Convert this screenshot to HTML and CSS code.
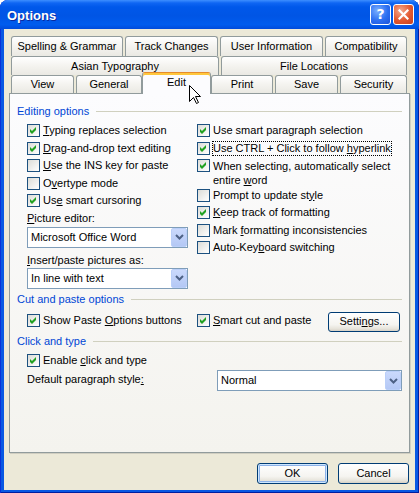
FILE: index.html
```html
<!DOCTYPE html>
<html lang="en">
<head>
<meta charset="utf-8">
<title>Options</title>
<link rel="stylesheet" href="styles.css">
</head>
<body>
<div class="window">
  <div class="titlebar">
    <span class="title">Options</span>
    <div class="caption-btns">
      <span class="cbtn help">?</span>
      <span class="cbtn close"><svg width="11" height="11" viewBox="0 0 11 11"><path d="M1.5 1.5 L9.5 9.5 M9.5 1.5 L1.5 9.5" stroke="#fff" stroke-width="2.2" stroke-linecap="square"/></svg></span>
    </div>
  </div>
  <div class="client">
    <div class="tabs">
      <div class="tab-row r1">
        <div class="tab t-sg">Spelling &amp; Grammar</div>
        <div class="tab t-tc">Track Changes</div>
        <div class="tab t-ui">User Information</div>
        <div class="tab t-co">Compatibility</div>
      </div>
      <div class="tab-row r2">
        <div class="tab t-at">Asian Typography</div>
        <div class="tab t-fl">File Locations</div>
      </div>
      <div class="tab-row r3">
        <div class="tab t-vi">View</div>
        <div class="tab t-ge">General</div>
        <div class="tab t-ed sel">Edit</div>
        <div class="tab t-pr">Print</div>
        <div class="tab t-sa">Save</div>
        <div class="tab t-se">Security</div>
      </div>
    </div>
    <div class="panel">
      <div class="legend">Editing options</div>
      <div class="cols">
        <div class="col">
          <div class="item"><span class="cb"><svg width="11" height="11" viewBox="0 0 11 11"><polygon points="2,4 4,6 8,2 8,5 4,9 2,7" fill="#21A121"/></svg></span><span class="lbl"><u>T</u>yping replaces selection</span></div>
          <div class="item"><span class="cb"><svg width="11" height="11" viewBox="0 0 11 11"><polygon points="2,4 4,6 8,2 8,5 4,9 2,7" fill="#21A121"/></svg></span><span class="lbl"><u>D</u>rag-and-drop text editing</span></div>
          <div class="item"><span class="cb"></span><span class="lbl"><u>U</u>se the INS key for paste</span></div>
          <div class="item"><span class="cb"></span><span class="lbl">O<u>v</u>ertype mode</span></div>
          <div class="item"><span class="cb"><svg width="11" height="11" viewBox="0 0 11 11"><polygon points="2,4 4,6 8,2 8,5 4,9 2,7" fill="#21A121"/></svg></span><span class="lbl">Us<u>e</u> smart cursoring</span></div>
          <div class="field-label"><u>P</u>icture editor:</div>
          <div class="select w-left"><span class="val">Microsoft Office Word</span><span class="drop"><svg width="9" height="6" viewBox="0 0 9 6"><polyline points="1,1 4.5,4.5 8,1" fill="none" stroke="#4D6185" stroke-width="2"/></svg></span></div>
          <div class="field-label second"><u>I</u>nsert/paste pictures as:</div>
          <div class="select w-left s2"><span class="val">In line with text</span><span class="drop"><svg width="9" height="6" viewBox="0 0 9 6"><polyline points="1,1 4.5,4.5 8,1" fill="none" stroke="#4D6185" stroke-width="2"/></svg></span></div>
        </div>
        <div class="col">
          <div class="item"><span class="cb"><svg width="11" height="11" viewBox="0 0 11 11"><polygon points="2,4 4,6 8,2 8,5 4,9 2,7" fill="#21A121"/></svg></span><span class="lbl">Use smart paragraph selection</span></div>
          <div class="item"><span class="cb"><svg width="11" height="11" viewBox="0 0 11 11"><polygon points="2,4 4,6 8,2 8,5 4,9 2,7" fill="#21A121"/></svg></span><span class="lbl focus">Use CTRL + Click to follow <u>h</u>yperlink</span></div>
          <div class="item tall"><span class="cb"><svg width="11" height="11" viewBox="0 0 11 11"><polygon points="2,4 4,6 8,2 8,5 4,9 2,7" fill="#21A121"/></svg></span><span class="lbl wrap"><span class="ln">When selecting, automatically select</span><span class="ln">entire <u>w</u>ord</span></span></div>
          <div class="item"><span class="cb"></span><span class="lbl">Prompt to update st<u>y</u>le</span></div>
          <div class="item"><span class="cb"><svg width="11" height="11" viewBox="0 0 11 11"><polygon points="2,4 4,6 8,2 8,5 4,9 2,7" fill="#21A121"/></svg></span><span class="lbl"><u>K</u>eep track of formatting</span></div>
          <div class="item"><span class="cb"></span><span class="lbl">Mark <u>f</u>ormatting inconsistencies</span></div>
          <div class="item"><span class="cb"></span><span class="lbl">Auto-Key<u>b</u>oard switching</span></div>
        </div>
      </div>

      <div class="legend l-cut">Cut and paste options</div>
      <div class="row-cut">
        <div class="item first"><span class="cb"><svg width="11" height="11" viewBox="0 0 11 11"><polygon points="2,4 4,6 8,2 8,5 4,9 2,7" fill="#21A121"/></svg></span><span class="lbl">Show Paste <u>O</u>ptions buttons</span></div>
        <div class="item"><span class="cb"><svg width="11" height="11" viewBox="0 0 11 11"><polygon points="2,4 4,6 8,2 8,5 4,9 2,7" fill="#21A121"/></svg></span><span class="lbl"><u>S</u>mart cut and paste</span></div>
        <div class="btn settings">Setti<u>n</u>gs...</div>
      </div>

      <div class="legend l-click">Click and type</div>
      <div class="item enable"><span class="cb"><svg width="11" height="11" viewBox="0 0 11 11"><polygon points="2,4 4,6 8,2 8,5 4,9 2,7" fill="#21A121"/></svg></span><span class="lbl">Enable <u>c</u>lick and type</span></div>
      <div class="row-style">
        <span class="lbl">Default paragraph style<u>:</u></span>
        <div class="select"><span class="val">Normal</span><span class="drop"><svg width="9" height="6" viewBox="0 0 9 6"><polyline points="1,1 4.5,4.5 8,1" fill="none" stroke="#4D6185" stroke-width="2"/></svg></span></div>
      </div>
    </div>
    <div class="dlg-buttons">
      <div class="btn default">OK</div>
      <div class="btn">Cancel</div>
    </div>
  </div>
  <svg class="cursor" width="13" height="20" viewBox="0 0 13 20"><path d="M0.5 0.5 L0.5 16.5 L4.5 12.5 L7.5 18.5 L9.5 17.5 L6.5 11.5 L11.5 11.5 Z" fill="#fff" stroke="#000" stroke-width="1" stroke-linejoin="miter"/></svg>
</div>
</body>
</html>
```

FILE: styles.css
```css
* { box-sizing: border-box; margin: 0; padding: 0; }
html, body { width: 419px; height: 493px; overflow: hidden; background: #fff; }
body {
  font-family: Tahoma, "Liberation Sans", Arial, sans-serif;
  font-size: 11px;
  line-height: 13px;
  color: #000;
}
u { text-decoration: underline; text-underline-offset: 1px; }

.window {
  position: relative;
  width: 419px;
  height: 493px;
  display: flex;
  flex-direction: column;
  background: #0858E3;
  border-radius: 8px 8px 0 0;
  box-shadow: inset 1px 0 #0831D9, inset -1px 0 #001EA0, inset 0 -1px #001EA0;
}

.titlebar {
  flex: none;
  height: 29px;
  display: flex;
  align-items: center;
  padding: 0 5px 0 7px;
  border-radius: 8px 8px 0 0;
  background: linear-gradient(#3D8EFF 0, #0F66F3 3px, #0058EA 7px, #0055E5 55%, #005CEE 85%, #004BDB 100%);
}
.title {
  padding-top: 2px;
  font-size: 13px;
  font-weight: bold;
  color: #fff;
  text-shadow: 1px 1px #0A2AA0;
}
.caption-btns { margin-left: auto; display: flex; gap: 2px; }
.cbtn {
  width: 21px;
  height: 21px;
  border: 1px solid #fff;
  border-radius: 3px;
  display: flex;
  align-items: center;
  justify-content: center;
}
.help {
  background: radial-gradient(circle at 35% 30%, #7AB0FF, #2D6FF1 55%, #1B52DA);
  color: #fff;
  font-family: "DejaVu Sans", sans-serif;
  font-weight: bold;
  font-size: 14px;
}
.close {
  background: radial-gradient(circle at 35% 30%, #F5A98D, #E3582F 55%, #C83F1E);
}

.client {
  flex: 1;
  margin: 0 4px 3px;
  background: #ECE9D8;
  padding: 7px 5px 6px;
  display: flex;
  flex-direction: column;
}

/* tabs */
.tabs { flex: none; display: flex; flex-direction: column; }
.tab-row { display: flex; gap: 2px; padding-left: 2px; }
.r1 { height: 20px; }
.r2 { height: 19px; }
.r3 { height: 18px; }
.tab {
  flex: none;
  border: 1px solid #919B9C;
  border-bottom: 0;
  border-radius: 3px 3px 0 0;
  background: linear-gradient(#FFFFFF, #F4F3EF 50%, #EAE9E3);
  display: flex;
  align-items: center;
  justify-content: center;
  white-space: nowrap;
}
.t-sg { width: 112px; }
.t-tc { width: 93px; }
.t-ui { width: 103px; }
.t-co { width: 82px; }
.t-at { width: 208px; }
.t-fl { width: 186px; }
.t-vi { width: 63px; }
.t-ge { width: 66px; }
.t-ed { width: 69px; }
.t-pr { width: 62px; }
.t-sa { width: 63px; }
.t-se { width: 67px; }
.tab.sel {
  position: relative;
  z-index: 2;
  margin: -3px -2px -1px;
  padding-bottom: 3px;
  background: #FCFCFE;
  border-top: 1px solid #E68B2C;
  box-shadow: inset 0 2px #FFC73C;
}

/* panel */
.panel {
  position: relative;
  z-index: 1;
  flex: none;
  height: 360px;
  border: 1px solid #919B9C;
  background: linear-gradient(#FCFCFE, #F4F3EE);
  padding: 11px 7px 0;
  box-shadow: 1px 1px 0 #D0CEC1;
}
.legend {
  display: flex;
  align-items: center;
  color: #0046D5;
  white-space: nowrap;
}
.legend::after {
  content: "";
  flex: 1;
  height: 1px;
  background: #D0D0BF;
  margin-left: 7px;
}
.cols {
  display: grid;
  grid-template-columns: 170px 1fr;
  align-items: start;
  margin: 6px 0 0 10px;
}
.item {
  display: flex;
  align-items: flex-start;
  margin-bottom: 4.5px;
}
.item.tall { margin-bottom: 2px; }
.cb {
  flex: none;
  width: 13px;
  height: 13px;
  border: 1px solid #1C5180;
  background: linear-gradient(135deg, #DCDCD7, #FFFFFF);
  margin-right: 3px;
}
.cb svg { display: block; }
.lbl { white-space: nowrap; }
.lbl.wrap { display: flex; flex-direction: column; line-height: 14px; margin-top: -0.5px; }
.ln { display: block; }
.focus { outline: 1px dotted #000; }

.field-label { margin-top: 1px; }
.field-label.second { margin-top: 6px; }
.select {
  display: flex;
  align-items: stretch;
  height: 21px;
  border: 1px solid #7F9DB9;
  background: #fff;
  padding-left: 3px;
  margin-top: 2px;
}
.select.s2 { margin-top: 1px; }
.select .val { flex: 1; white-space: nowrap; display: flex; align-items: center; }
.w-left { width: 161px; }
.drop {
  flex: none;
  width: 16px;
  border: 1px solid #BACFF9;
  border-radius: 2px;
  background: linear-gradient(#CAD9FC, #B4C8F5);
  display: flex;
  align-items: center;
  justify-content: center;
}
.drop svg { display: block; }

.l-cut { margin-top: 4px; }
.row-cut {
  display: flex;
  align-items: flex-start;
  margin: 6px 2px 0 10px;
}
.row-cut .item { margin: 2px 0 0; }
.row-cut .first { width: 170px; }

.btn {
  height: 21px;
  width: 71px;
  border: 1px solid #003C74;
  border-radius: 3px;
  background: linear-gradient(#FFFFFF, #F5F4F0 65%, #E6E3DA 88%, #D6D0C5);
  display: flex;
  align-items: center;
  justify-content: center;
}
.btn.settings { margin-left: auto; height: 20px; width: 72px; }
.btn.default {
  box-shadow: inset 0 0 0 1px #CEE7FF, inset 0 0 0 2px #8DB2E8;
}

.l-click { margin-top: 3px; }
.item.enable { margin: 6.5px 0 0 10px; }
.row-style {
  display: grid;
  grid-template-columns: 190px 185px;
  align-items: center;
  margin: 1px 0 0 10px;
}

.dlg-buttons {
  flex: none;
  margin-top: 10px;
  display: flex;
  justify-content: flex-end;
  gap: 10px;
  padding-right: 1px;
}

.cursor {
  position: absolute;
  left: 189px;
  top: 85px;
  z-index: 5;
}
```
